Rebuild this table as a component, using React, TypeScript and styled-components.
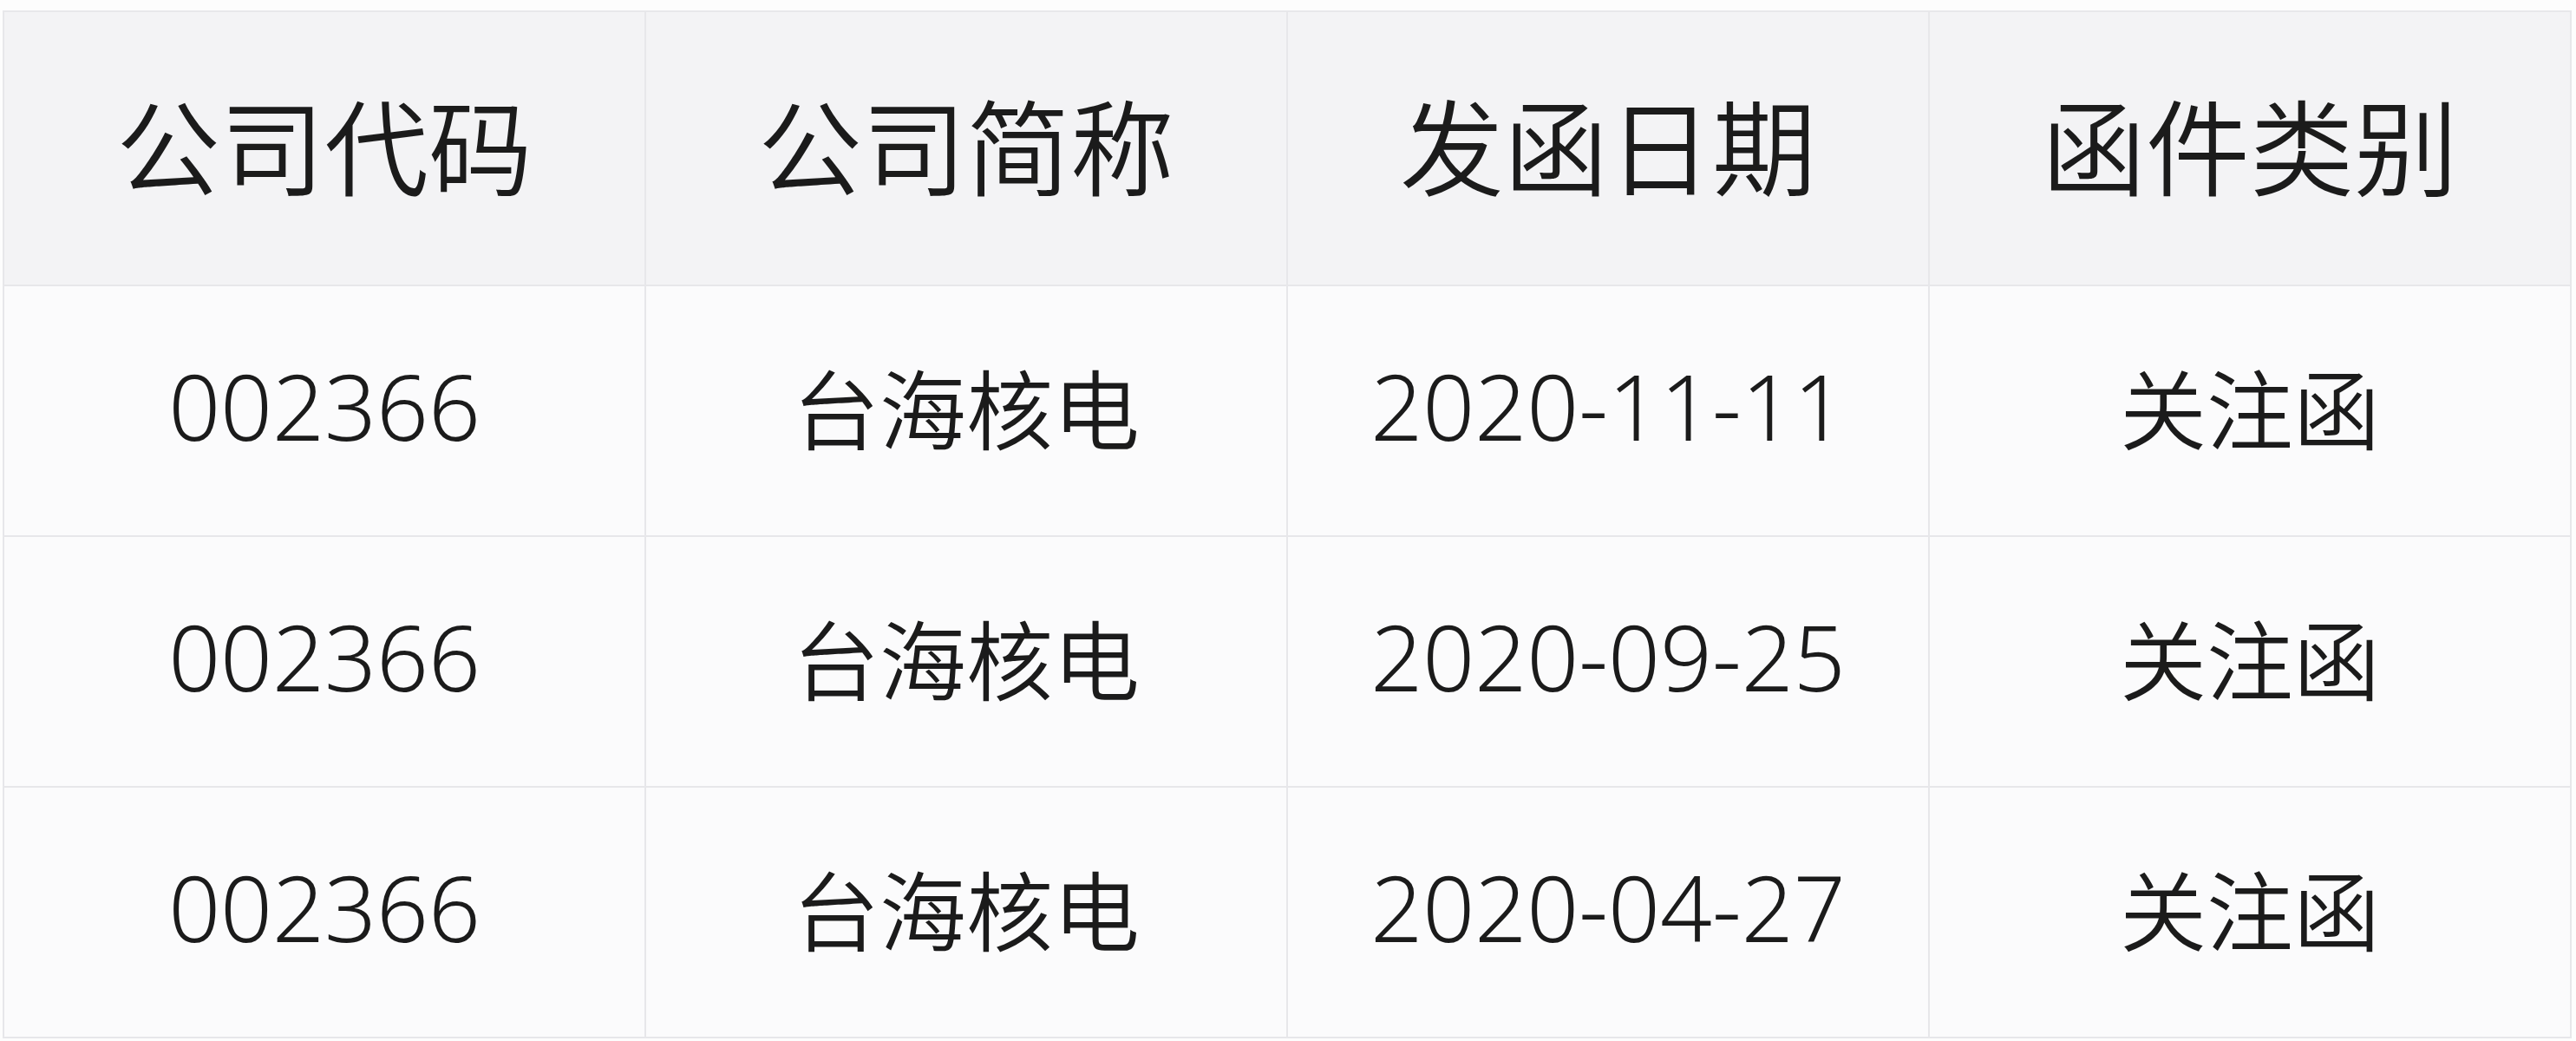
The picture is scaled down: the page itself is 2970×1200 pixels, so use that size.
import React from 'react';
import styled, { createGlobalStyle } from 'styled-components';

const GlobalStyle = createGlobalStyle`
    html, body {
        margin: 0;
        padding: 0;
        background: #fdfdfd;
    }

    body {
        font-family: 'Noto Sans', 'Noto Sans CJK SC', sans-serif;
        color: #1b1b1b;
    }
`;

const Page = styled.div`
    padding: 12px 0 0 3px;
`;

const Table = styled.table`
    width: 2960px;
    table-layout: fixed;
    border-collapse: collapse;
    background: #fbfbfc;
    border: 2px solid #e7e7ea;
`;

const HeadCell = styled.th`
    height: 302px;
    padding: 0 0 12px;
    background: #f3f3f5;
    border: 2px solid #e7e7ea;
    font-family: 'Noto Sans CJK SC', sans-serif;
    font-size: 120px;
    font-weight: 350;
    line-height: 1;
    text-align: center;
    vertical-align: middle;
`;

const Cell = styled.td<{ numeric?: boolean }>`
    height: 275px;
    padding: 0 0 12px;
    border: 2px solid #e7e7ea;
    text-align: center;
    vertical-align: middle;
    font-family: ${({ numeric }) =>
        numeric ? "'Noto Sans', 'Noto Sans CJK SC', sans-serif" : "'Noto Sans CJK SC', sans-serif"};
    font-size: ${({ numeric }) => (numeric ? '105px' : '100px')};
    font-weight: ${({ numeric }) => (numeric ? 300 : 350)};
    line-height: 1;
`;

const columns = ['公司代码', '公司简称', '发函日期', '函件类别'];

const rows = [
    { code: '002366', name: '台海核电', date: '2020-11-11', kind: '关注函' },
    { code: '002366', name: '台海核电', date: '2020-09-25', kind: '关注函' },
    { code: '002366', name: '台海核电', date: '2020-04-27', kind: '关注函' },
];

const App: React.FC = () => {
    return (
        <>
            <GlobalStyle />
            <Page>
                <Table>
                    <colgroup>
                        {columns.map((c) => (
                            <col key={c} style={{ width: 740 }} />
                        ))}
                    </colgroup>
                    <thead>
                        <tr>
                            {columns.map((c) => (
                                <HeadCell key={c}>{c}</HeadCell>
                            ))}
                        </tr>
                    </thead>
                    <tbody>
                        {rows.map((r) => (
                            <tr key={r.date}>
                                <Cell numeric>{r.code}</Cell>
                                <Cell>{r.name}</Cell>
                                <Cell numeric>{r.date}</Cell>
                                <Cell>{r.kind}</Cell>
                            </tr>
                        ))}
                    </tbody>
                </Table>
            </Page>
        </>
    );
};

export default App;
